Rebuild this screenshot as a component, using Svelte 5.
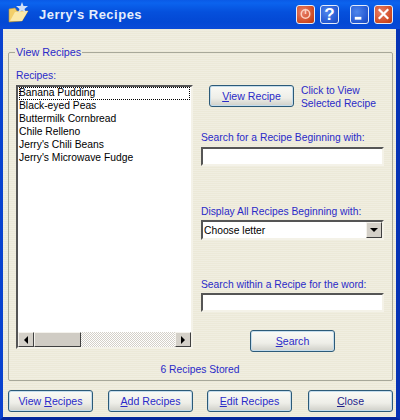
<script>
  const recipes = ['Banana Pudding','Black-eyed Peas','Buttermilk Cornbread','Chile Relleno',"Jerry's Chili Beans","Jerry's Microwave Fudge"];
</script>

<div class="win">
  <header class="title">
    <svg class="logo" width="22" height="22" viewBox="0 0 22 22">
      <path d="M2 7 L2 20 L15 19 L21 9 L10 9 L8 6 Z" fill="#f2cf6a" stroke="#b8923a" stroke-width=".6"/>
      <path d="M3 19 L8 10 L21 9 L15 19 Z" fill="#fbe9a8"/>
      <path d="M15 0 L16.5 4 L21 4 L17.5 7 L19 11 L15 8.5 L11 11 L12.5 7 L9 4 L13.5 4 Z" fill="#cfe0f8"/>
    </svg>
    <span class="name">Jerry's Recipes</span>
    <div class="ctrls">
      <div class="cb red"><svg viewBox="0 0 18 18"><circle cx="9" cy="9" r="4.5" fill="none" stroke="#fbd0c0" stroke-width="1.6"/><path d="M9 3.5V9" stroke="#fbd0c0" stroke-width="1.6"/></svg></div>
      <div class="cb blue q"><span>?</span></div>
      <div class="gap"></div>
      <div class="cb blue"><svg viewBox="0 0 18 18"><rect x="4" y="12" width="7" height="3" fill="#fff"/></svg></div>
      <div class="cb red"><svg viewBox="0 0 18 18"><path d="M4 4L14 14M14 4L4 14" stroke="#fff" stroke-width="2.4"/></svg></div>
    </div>
  </header>

  <main class="client">
    <fieldset class="group">
      <legend>View Recipes</legend>
      <div class="cols">
        <div class="left">
          <div class="lbl">Recipes:</div>
          <div class="list">
            <div class="items">
              {#each recipes as r, i}<div class="item" class:sel={i === 0}>{r}</div>{/each}
            </div>
            <div class="hscroll">
              <div class="arrow"><i class="tl"></i></div>
              <div class="thumb"></div>
              <div class="track"></div>
              <div class="arrow"><i class="tr"></i></div>
            </div>
          </div>
        </div>
        <div class="right">
          <div class="viewrow">
            <button class="btn"><u>V</u>iew Recipe</button>
            <div class="hint">Click to View<br />Selected Recipe</div>
          </div>
          <div class="lbl s1">Search for a Recipe Beginning with:</div>
          <div class="field"></div>
          <div class="lbl">Display All Recipes Beginning with:</div>
          <div class="field combo"><span>Choose letter</span><div class="arrow drop"><i class="td"></i></div></div>
          <div class="lbl">Search within a Recipe for the word:</div>
          <div class="field last"></div>
          <button class="btn srch"><u>S</u>earch</button>
        </div>
      </div>
      <div class="stored">6 Recipes Stored</div>
    </fieldset>
    <footer class="bar">
      <button class="btn"><span>View <u>R</u>ecipes</span></button>
      <button class="btn"><span><u>A</u>dd Recipes</span></button>
      <button class="btn"><span><u>E</u>dit Recipes</span></button>
      <button class="btn dark"><span><u>C</u>lose</span></button>
    </footer>
  </main>
</div>

<style>
  :global(body) { margin: 0; background: #0a3fc8; }
  .win {
    width: 400px; height: 420px; box-sizing: border-box;
    display: flex; flex-direction: column;
    background: #0b45d6;
    border-left: 3px solid #0a42cf; border-right: 4px solid #0633b5; border-bottom: 3px solid #04279c;
    font: 10.3px "Liberation Sans", Arial, sans-serif; color: #000;
  }
  .title {
    height: 29px; flex: none; display: flex; align-items: center;
    margin: 0 -4px 0 -3px; padding: 0 7px 0 7px;
    background: linear-gradient(#0a5ae6 0, #0b63ee 3px, #0550dc 12px, #0348d4 22px, #0a4ad8 29px);
  }
  .logo { flex: none; margin-top: -3px; }
  .name { margin-left: 10px; font: bold 13px "Liberation Sans", Arial, sans-serif; letter-spacing: .5px; color: #e6eefc; }
  .ctrls { margin-left: auto; display: flex; gap: 5px; margin-top: -1px; }
  .gap { width: 1px; }
  .cb { width: 19px; height: 19px; box-sizing: border-box; border: 1px solid #e4ecfa; border-radius: 3px; display: flex; align-items: center; justify-content: center; }
  .cb svg { width: 18px; height: 18px; display: block; }
  .red { background: radial-gradient(circle at 35% 35%, #e8806a, #cf4a22 70%, #b83810); }
  .blue { background: radial-gradient(circle at 35% 35%, #4f86ec, #2458d2 70%, #1a46b8); }
  .q span { font: bold 17px "Liberation Sans", Arial, sans-serif; color: #fff; line-height: 1; }

  .client {
    flex: 1; min-height: 0; display: flex; flex-direction: column;
    background-color: #ece9d8;
    background-image: repeating-linear-gradient(0deg, rgba(255,255,255,.22) 0 1px, transparent 1px 2px);
    padding: 17px 3px 5px 5px;
  }
  .group {
    margin: 0; padding: 0 8px 0 7px; height: 336px; box-sizing: border-box;
    border: 1px solid #a8a89a; border-radius: 2px;
    display: flex; flex-direction: column;
  }
  .group legend { padding: 0 1px; margin-left: -1px; color: #2a2ac8; font-size: 10.8px; line-height: 13px; }
  .cols { display: flex; gap: 8px; }
  .left { width: 177px; flex: none; padding-top: 10px; }
  .lbl { color: #2a2ac8; line-height: 13px; white-space: nowrap; }
  .list {
    margin-top: 3px; height: 264px; box-sizing: border-box; display: flex; flex-direction: column; background: #fff;
    border: 2px solid; border-color: #555 #f4f2e8 #f4f2e8 #555;
  }
  .items { flex: 1; padding: 0 1px; }
  .item { height: 13px; line-height: 12px; white-space: nowrap; }
  .sel { outline: 1px dotted #000; outline-offset: -1px; }
  .hscroll { height: 15px; flex: none; display: flex; }
  .arrow {
    width: 16px; flex: none; box-sizing: border-box; background: #d4d0c8; display: flex; align-items: center; justify-content: center;
    border: 1px solid; border-color: #f4f2ec #404040 #404040 #f4f2ec;
  }
  .arrow i { display: block; width: 0; height: 0; border: 4px solid transparent; }
  .tl { border-right-color: #000 !important; border-left-width: 0 !important; }
  .tr { border-left-color: #000 !important; border-right-width: 0 !important; }
  .td { border-top-color: #000 !important; border-bottom-width: 0 !important; }
  .thumb { width: 47px; background: #d0ccc4; border: 1px solid; border-color: #f4f2ec #404040 #404040 #f4f2ec; box-sizing: border-box; }
  .track { flex: 1; background: repeating-conic-gradient(#d4d0c8 0 25%, #fff 0 50%) 0 0 / 2px 2px; }

  .right { flex: 1; min-width: 0; display: flex; flex-direction: column; padding-top: 26px; }
  .viewrow { display: flex; align-items: flex-start; padding-left: 8px; gap: 7px; height: 29px; }
  .hint { color: #2a2ac8; line-height: 13px; white-space: nowrap; margin-top: -1px; }
  .s1 { margin-top: 17px; }
  .right > .field { margin-top: 3px; }
  .right > .combo, .right > .last { margin-top: 2px; }
  .field {
    width: 183px; height: 19px; box-sizing: border-box; background: #fff; flex: none;
    border: 2px solid; border-color: #555 #f4f2e8 #f4f2e8 #555;
  }
  .s1 + .field { margin-bottom: 39px; }
  .combo { height: 20px; display: flex; align-items: center; padding-left: 1px; margin-bottom: 38px; }
  .combo span { flex: 1; }
  .drop { width: 16px; height: 16px; }
  .btn {
    width: 85px; height: 22px; padding: 0; box-sizing: border-box; flex: none;
    border: 1px solid #2c5a78; border-radius: 3px;
    background: linear-gradient(#fafaf6, #eeeee8 60%, #cfcfc8);
    box-shadow: inset 0 0 0 1px #c4dcec;
    font: 10.6px "Liberation Sans", Arial, sans-serif; color: #2a2ac8;
  }
  .srch { align-self: flex-start; margin: 18px 0 0 49px; }
  .stored { margin: 11px 0 0 -8px; width: 100%; text-align: center; color: #2a2ac8; line-height: 13px; padding-left: 8px; }
  .bar { display: flex; margin-top: 9px; }
  .bar .btn:nth-child(2) { margin-left: 15px; }
  .bar .btn:nth-child(3) { margin-left: 14px; }
  .bar .btn:nth-child(4) { margin-left: 16px; }
  .dark { color: #1e1e8c; }
</style>
